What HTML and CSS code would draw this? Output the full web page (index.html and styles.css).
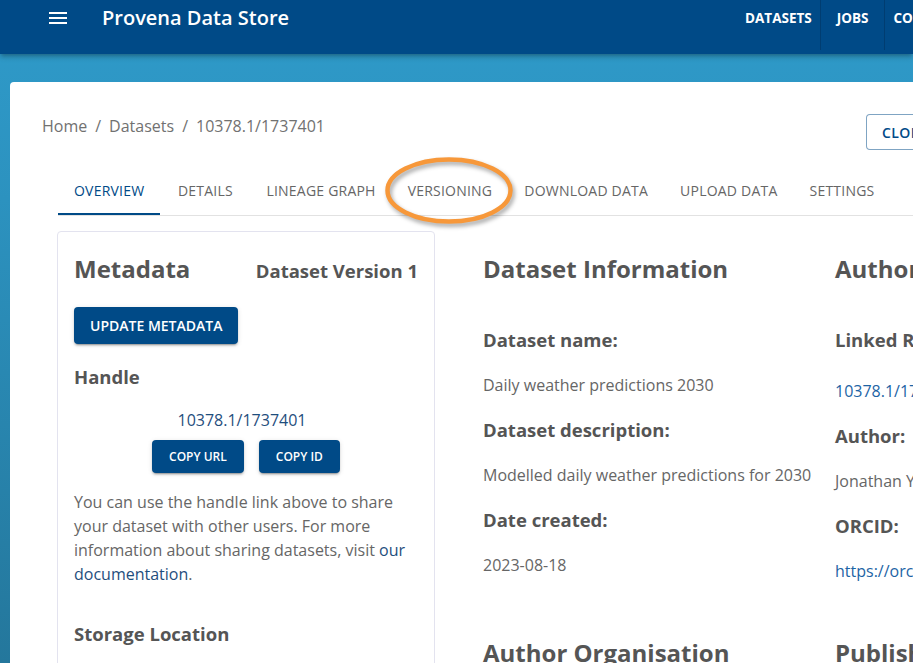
FILE: index.html
```html
<!DOCTYPE html>
<html lang="en">
<head>
<meta charset="utf-8">
<title>Provena Data Store</title>
<link rel="stylesheet" href="styles.css">
</head>
<body>
<header class="appbar">
  <div class="brand">
    <span class="menu-icon">
      <svg width="18" height="14" viewBox="0 0 18 14"><rect x="0" y="1" width="18" height="2" fill="#fff"/><rect x="0" y="6" width="18" height="2" fill="#fff"/><rect x="0" y="11" width="18" height="2" fill="#fff"/></svg>
    </span>
    <span class="title">Provena Data Store</span>
  </div>
  <nav class="nav">
    <a class="nav-item nav-first">DATASETS</a>
    <a class="nav-item nav-mid">JOBS</a>
    <a class="nav-item nav-last">CONTACT US</a>
  </nav>
</header>
<main class="page">
  <section class="sheet">
    <div class="top-row">
      <nav class="crumbs"><span>Home</span><span class="sep">/</span><span>Datasets</span><span class="sep">/</span><span>10378.1/1737401</span></nav>
      <div><button class="btn-outline">CLONE DATASET</button></div>
    </div>
    <div class="body">
      <div class="tabs">
        <div class="tab active">OVERVIEW</div>
        <div class="tab">DETAILS</div>
        <div class="tab">LINEAGE GRAPH</div>
        <div class="tab">VERSIONING</div>
        <div class="tab">DOWNLOAD DATA</div>
        <div class="tab">UPLOAD DATA</div>
        <div class="tab">SETTINGS</div>
      </div>
      <div class="content">
        <aside class="meta-card">
          <div class="card-head">
            <h2 class="h-big">Metadata</h2>
            <span class="version">Dataset Version 1</span>
          </div>
          <div><button class="btn btn-lg">UPDATE METADATA</button></div>
          <h3 class="h-sub handle-h">Handle</h3>
          <div class="handle-link"><a class="link-dark">10378.1/1737401</a></div>
          <div class="copy-row">
            <button class="btn btn-sm">COPY URL</button>
            <button class="btn btn-sm">COPY ID</button>
          </div>
          <p class="note">You can use the handle link above to share your dataset with other users. For more information about sharing datasets, visit <a class="link-dark">our documentation</a>.</p>
          <h3 class="h-sub storage-h">Storage Location</h3>
        </aside>
        <div class="info">
          <div class="col">
            <h2 class="h-big">Dataset Information</h2>
            <h3 class="h-sub label first">Dataset name:</h3>
            <p class="val">Daily weather predictions 2030</p>
            <h3 class="h-sub label">Dataset description:</h3>
            <p class="val">Modelled daily weather predictions for 2030</p>
            <h3 class="h-sub label">Date created:</h3>
            <p class="val">2023-08-18</p>
          </div>
          <div class="col">
            <h2 class="h-big">Author Information</h2>
            <h3 class="h-sub label first">Linked Registry Person:</h3>
            <p class="val val-link"><a class="link-blue">10378.1/1737388</a></p>
            <h3 class="h-sub label">Author:</h3>
            <p class="val">Jonathan Yu</p>
            <h3 class="h-sub label">ORCID:</h3>
            <p class="val"><a class="link-blue">https://orcid.org/0000-0002-2237-0091</a></p>
          </div>
          <h2 class="h-big">Author Organisation</h2>
          <h2 class="h-big">Publisher Organisation</h2>
        </div>
      </div>
    </div>
  </section>
</main>
<svg class="highlight" width="150" height="90" viewBox="0 0 150 90" aria-hidden="true">
  <ellipse cx="69" cy="40.5" rx="61.5" ry="31" fill="none" stroke="#f7983a" stroke-width="4.5"/>
</svg>
</body>
</html>
```
FILE: styles.css
```css
* { box-sizing: border-box; }

html, body {
  margin: 0;
  padding: 0;
}

body {
  width: 913px;
  height: 663px;
  overflow: hidden;
  position: relative;
  font-family: "Open Sans", "Liberation Sans", sans-serif;
  background: linear-gradient(180deg, #2f9bca 0px, #2c92bf 200px, #24779c 663px);
}

.appbar {
  position: relative;
  z-index: 2;
  height: 54px;
  background: #004a87;
  display: grid;
  grid-template-columns: 737px auto;
  box-shadow: 0 2px 4px -1px rgba(0,0,0,0.25), 0 4px 5px 0 rgba(0,0,0,0.14);
}

.brand {
  height: 36px;
  display: flex;
  align-items: center;
  padding-left: 49px;
}

.menu-icon {
  display: flex;
  width: 18px;
}

.title {
  margin-left: 35px;
  color: #fff;
  font-size: 20px;
  line-height: 36px;
  font-weight: 600;
}

.nav {
  display: flex;
  white-space: nowrap;
}

.nav-item {
  height: 50px;
  color: #fff;
  font-size: 13.5px;
  font-weight: 700;
  line-height: 36px;
  border-right: 1px solid #003d71;
}

.nav-first { padding: 0 8px; }
.nav-mid { padding: 0 16px; }
.nav-last { padding: 0 8px; }

.page {
  padding: 28px 0 0 10px;
}

.sheet {
  width: 1300px;
  min-height: 700px;
  background: #fff;
  border-radius: 4px;
  padding: 32px 0 0 32px;
}

.top-row {
  display: grid;
  grid-template-columns: 824px auto;
  height: 36px;
}

.crumbs {
  font-size: 16px;
  line-height: 24px;
  color: #717171;
}

.sep {
  margin: 0 8px;
}

.btn-outline {
  height: 36px;
  padding: 5px 15px;
  border: 1px solid rgba(0, 74, 135, 0.5);
  border-radius: 4px;
  background: #fff;
  color: #004a87;
  font-family: inherit;
  font-size: 14px;
  font-weight: 600;
  letter-spacing: 0.4px;
  white-space: nowrap;
}

.body {
  margin-top: 17px;
  margin-left: 15px;
}

.tabs {
  display: flex;
  margin-left: 1px;
  border-bottom: 1px solid #e2e2e2;
}

.tab {
  min-width: 90px;
  height: 48px;
  padding: 0 16px 1px;
  display: flex;
  align-items: center;
  justify-content: center;
  font-size: 14px;
  font-weight: 500;
  letter-spacing: 0.22px;
  color: #666;
  white-space: nowrap;
}

.tab.active {
  color: #004a87;
  box-shadow: inset 0 -2px 0 #004a87;
}

.content {
  display: flex;
  align-items: flex-start;
  margin-top: 15px;
}

.meta-card {
  width: 378px;
  flex: none;
  border: 1px solid #e3e3ef;
  border-radius: 4px;
  padding: 21px 16px 40px;
  color: #666;
}

.card-head {
  display: flex;
  justify-content: space-between;
  align-items: baseline;
}

.h-big {
  margin: 0;
  font-size: 24px;
  line-height: 32px;
  font-weight: 700;
  color: #555;
  white-space: nowrap;
}

.version {
  font-size: 18.5px;
  font-weight: 700;
  color: #555;
}

.h-sub {
  margin: 0;
  font-size: 18.5px;
  line-height: 27px;
  font-weight: 700;
  color: #555;
  white-space: nowrap;
}

.btn {
  border: none;
  border-radius: 4px;
  background: #004a87;
  color: #fff;
  font-family: inherit;
  font-weight: 600;
  white-space: nowrap;
  box-shadow: 0 3px 1px -2px rgba(0,0,0,0.2), 0 2px 2px 0 rgba(0,0,0,0.14), 0 1px 5px 0 rgba(0,0,0,0.12);
}

.btn-lg {
  margin-top: 22px;
  height: 37px;
  padding: 0 16px;
  font-size: 14px;
  line-height: 21px;
}

.btn-sm {
  height: 33px;
  padding: 0 17px;
  font-size: 12px;
  line-height: 23px;
}

.handle-h {
  margin-top: 19px;
}

.handle-link {
  margin-top: 18px;
  padding-right: 8px;
  text-align: center;
  font-size: 16px;
  line-height: 24px;
}

.link-dark {
  color: #1f4e7d;
  text-decoration: none;
}

.link-blue {
  color: #1d64a5;
  text-decoration: none;
}

.copy-row {
  margin-top: 8px;
  display: flex;
  justify-content: center;
  gap: 15px;
}

.note {
  margin: 17px 0 0;
  font-size: 16px;
  line-height: 24px;
  color: #666;
}

.storage-h {
  margin-top: 34px;
}

.info {
  margin-left: 48px;
  padding-top: 22px;
  display: grid;
  grid-template-columns: 352px 352px;
  row-gap: 54px;
}

.col {
  display: flex;
  flex-direction: column;
}

.label {
  margin-top: 18.5px;
}

.label.first {
  margin-top: 40.5px;
}

.val {
  margin: 20.5px 0 0;
  font-size: 16px;
  line-height: 24px;
  color: #666;
  white-space: nowrap;
}

.val-link {
  margin-top: 26.5px;
}

.highlight {
  position: absolute;
  left: 380px;
  top: 150px;
  z-index: 3;
  filter: drop-shadow(2px 3px 2px rgba(0,0,0,0.35));
}
```
